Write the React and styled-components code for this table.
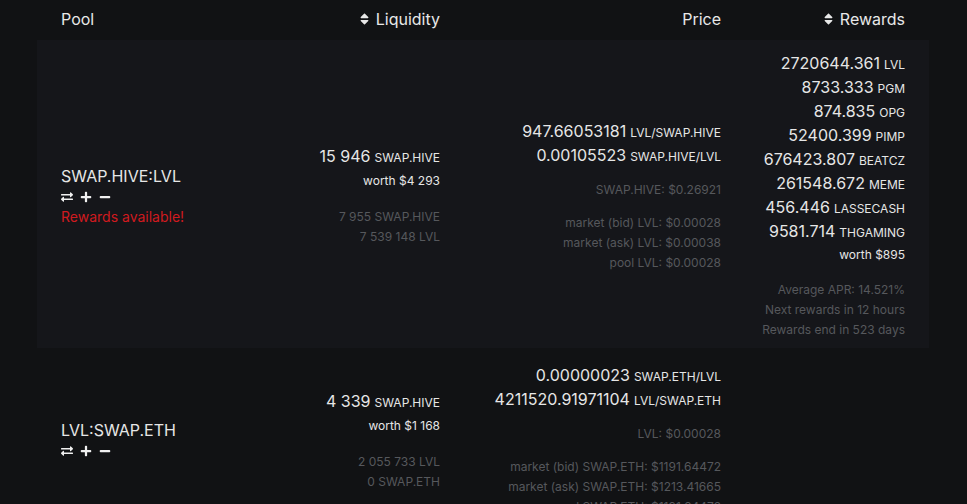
import styled, { createGlobalStyle } from "styled-components";
import { FaSort, FaExchangeAlt, FaPlus, FaMinus } from "react-icons/fa";

const GlobalStyle = createGlobalStyle`
  body {
    margin: 0;
    background: #111214;
    font-family: Inter, "Noto Sans", sans-serif;
    color: #e6e6e6;
  }
`;

const Page = styled.div`
  width: 967px;
  height: 504px;
  overflow: hidden;
  padding-left: 37px;
  box-sizing: border-box;
`;

const Table = styled.div`
  width: 892px;
`;

const Row = styled.div`
  display: grid;
  grid-template-columns: 220px 207px 281px 184px;
  align-items: center;
  padding: 11px 0 8px;
  background: ${(p) => (p.$highlight ? "#15161a" : "transparent")};
  & + & {
    margin-top: 4px;
  }
`;

const HeadRow = styled.div`
  display: grid;
  grid-template-columns: 220px 207px 281px 184px;
  align-items: center;
  height: 40px;
`;

const Cell = styled.div`
  padding: 0 24px;
  display: flex;
  flex-direction: column;
  align-items: ${(p) => (p.$left ? "flex-start" : "flex-end")};
  text-align: ${(p) => (p.$left ? "left" : "right")};
`;

const HeadCell = styled.div`
  padding: 0 24px 2px;
  display: flex;
  align-items: center;
  justify-content: ${(p) => (p.$left ? "flex-start" : "flex-end")};
  gap: 6px;
  font-size: 16px;
  color: #e8e8e8;

  svg {
    width: 11px;
    height: 14px;
  }
`;

const PoolName = styled.div`
  font-size: 16px;
  line-height: 22px;
`;

const Actions = styled.div`
  display: flex;
  align-items: center;
  gap: 7px;
  height: 20px;
  color: #f0f0f0;

  svg {
    width: 12px;
    height: 12px;
  }
`;

const Alert = styled.div`
  color: #d01a1f;
  font-size: 14px;
  line-height: 19px;
`;

const Amount = styled.div`
  font-size: 16px;
  line-height: 24px;
  white-space: nowrap;
`;

const Unit = styled.span`
  font-size: 12px;
  line-height: 1;
  margin-left: 4px;
`;

const Worth = styled.div`
  font-size: 12px;
  line-height: ${(p) => (p.$tall ? "26px" : "24px")};
`;

const Muted = styled.div`
  font-size: 12px;
  line-height: 20px;
  color: #56585c;
  white-space: nowrap;
`;

const Group = styled.div`
  display: flex;
  flex-direction: column;
  align-items: flex-end;
  & + & {
    margin-top: 13px;
  }
`;

const pools = [
  {
    name: "SWAP.HIVE:LVL",
    highlight: true,
    rewardsAvailable: true,
    liquidity: { amount: "15 946", unit: "SWAP.HIVE", worth: "worth $4 293" },
    reserves: ["7 955 SWAP.HIVE", "7 539 148 LVL"],
    prices: [
      ["947.66053181", "LVL/SWAP.HIVE"],
      ["0.00105523", "SWAP.HIVE/LVL"],
    ],
    base: "SWAP.HIVE: $0.26921",
    market: ["market (bid) LVL: $0.00028", "market (ask) LVL: $0.00038", "pool LVL: $0.00028"],
    rewards: [
      ["2720644.361", "LVL"],
      ["8733.333", "PGM"],
      ["874.835", "OPG"],
      ["52400.399", "PIMP"],
      ["676423.807", "BEATCZ"],
      ["261548.672", "MEME"],
      ["456.446", "LASSECASH"],
      ["9581.714", "THGAMING"],
    ],
    rewardsWorth: "worth $895",
    rewardsInfo: ["Average APR: 14.521%", "Next rewards in 12 hours", "Rewards end in 523 days"],
  },
  {
    name: "LVL:SWAP.ETH",
    liquidity: { amount: "4 339", unit: "SWAP.HIVE", worth: "worth $1 168" },
    reserves: ["2 055 733 LVL", "0 SWAP.ETH"],
    prices: [
      ["0.00000023", "SWAP.ETH/LVL"],
      ["4211520.91971104", "LVL/SWAP.ETH"],
    ],
    base: "LVL: $0.00028",
    market: [
      "market (bid) SWAP.ETH: $1191.64472",
      "market (ask) SWAP.ETH: $1213.41665",
      "pool SWAP.ETH: $1191.64472",
    ],
    rewards: [],
  },
];

function PoolRow({ pool }) {
  return (
    <Row $highlight={pool.highlight}>
      <Cell $left>
        <PoolName>{pool.name}</PoolName>
        <Actions>
          <FaExchangeAlt />
          <FaPlus />
          <FaMinus />
        </Actions>
        {pool.rewardsAvailable && <Alert>Rewards available!</Alert>}
      </Cell>
      <Cell>
        <Group>
          <Amount>
            {pool.liquidity.amount}
            <Unit>{pool.liquidity.unit}</Unit>
          </Amount>
          <Worth $tall>{pool.liquidity.worth}</Worth>
        </Group>
        <Group>
          {pool.reserves.map((r) => (
            <Muted key={r}>{r}</Muted>
          ))}
        </Group>
      </Cell>
      <Cell>
        <Group>
          {pool.prices.map(([v, u]) => (
            <Amount key={u}>
              {v}
              <Unit>{u}</Unit>
            </Amount>
          ))}
        </Group>
        <Group>
          <Muted>{pool.base}</Muted>
        </Group>
        <Group>
          {pool.market.map((m) => (
            <Muted key={m}>{m}</Muted>
          ))}
        </Group>
      </Cell>
      <Cell>
        {pool.rewards.length > 0 && (
          <>
            <Group>
              {pool.rewards.map(([v, u]) => (
                <Amount key={u}>
                  {v}
                  <Unit>{u}</Unit>
                </Amount>
              ))}
              <Worth>{pool.rewardsWorth}</Worth>
            </Group>
            <Group>
              {pool.rewardsInfo.map((t) => (
                <Muted key={t}>{t}</Muted>
              ))}
            </Group>
          </>
        )}
      </Cell>
    </Row>
  );
}

export default function App() {
  return (
    <Page>
      <GlobalStyle />
      <Table>
        <HeadRow>
          <HeadCell $left>Pool</HeadCell>
          <HeadCell>
            <FaSort />
            Liquidity
          </HeadCell>
          <HeadCell>Price</HeadCell>
          <HeadCell>
            <FaSort />
            Rewards
          </HeadCell>
        </HeadRow>
        {pools.map((p) => (
          <PoolRow key={p.name} pool={p} />
        ))}
      </Table>
    </Page>
  );
}
